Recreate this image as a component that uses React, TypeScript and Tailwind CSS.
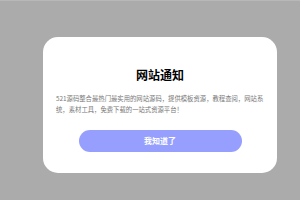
export default function App() {
  return (
    <div
      className="w-[300px] h-[200px] bg-[#ababab] border-t border-[#b8b8b8] pt-[36px] pl-[43px]"
      style={{ fontFamily: '"Noto Sans CJK SC", "Liberation Sans", sans-serif' }}
    >
      {/* Notice card */}
      <div className="w-[234px] h-[136px] rounded-[15px] bg-white flex flex-col items-center pt-[31px] px-[13px]">
        <h1 className="text-[12px] leading-[14px] font-bold text-black">网站通知</h1>
        <p className="mt-[11px] w-full text-[6.35px] leading-[11px] text-[#777]">
          521源码整合最热门最实用的网站源码，提供模板资源，教程查阅，网站系统，素材工具，免费下载的一站式资源平台！
        </p>
        <button className="mt-[15px] w-[163px] h-[22px] rounded-full bg-[#969ffd] text-white text-[8px] font-bold">
          我知道了
        </button>
      </div>
    </div>
  );
}
